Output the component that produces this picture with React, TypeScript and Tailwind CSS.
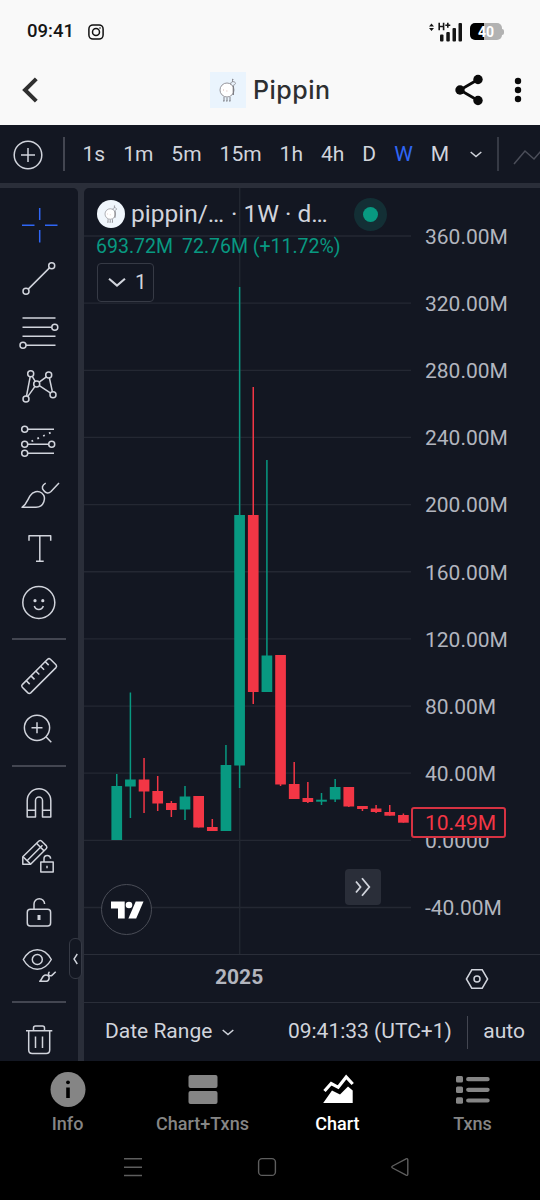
import type { ReactNode } from "react";
import { clsx } from "clsx";

// [high, bodyTop, bodyBottom, low, up]
const candles: [number, number, number, number, boolean][] = [
  [774, 786, 840, 840, true],
  [692.5, 779.5, 786.5, 818, true],
  [758, 779.5, 791.5, 813, false],
  [776, 791, 803.5, 811, false],
  [801, 803, 810, 817, false],
  [786, 796.5, 809.5, 820, true],
  [796, 796, 827.5, 827.5, false],
  [819, 827, 831, 831, false],
  [745, 765, 831, 831, true],
  [287, 515, 765.5, 788, true],
  [387, 515, 692, 704, false],
  [460, 655.5, 692, 692, true],
  [655, 655, 784.5, 786, false],
  [762, 784, 799, 799, false],
  [782, 798, 802, 803, false],
  [793, 799.7, 801.7, 805, true],
  [779, 787, 799.5, 802, true],
  [787, 787, 806.5, 807, false],
  [806, 806, 809, 811, false],
  [805, 808.5, 812, 813, false],
  [805, 812, 815.7, 815.7, false],
  [813.5, 815, 822.7, 822.7, false],
];

const prices = [
  "360.00M",
  "320.00M",
  "280.00M",
  "240.00M",
  "200.00M",
  "160.00M",
  "120.00M",
  "80.00M",
  "40.00M",
  "0.0000",
  "-40.00M",
];

const intervals = ["1s", "1m", "5m", "15m", "1h", "4h", "D", "W", "M"];

function Tool({ children, className }: { children: ReactNode; className?: string }) {
  return (
    <button className={clsx("ml-3 block h-[54px] w-[54px] shrink-0", className ?? "text-[#d1d4dc]")}>
      <svg
        viewBox="0 0 54 54"
        className="h-[54px] w-[54px]"
        fill="none"
        stroke="currentColor"
        strokeWidth="1.5"
        strokeLinejoin="round"
      >
        {children}
      </svg>
    </button>
  );
}

function Separator({ className }: { className: string }) {
  return (
    <div className={clsx("ml-3 flex w-[54px] shrink-0 items-center", className)}>
      <div className="h-[1.5px] w-full bg-[#434651]" />
    </div>
  );
}

function PippinMark({ className }: { className: string }) {
  return (
    <svg viewBox="0 0 18 24" className={className} fill="none" stroke="#8b8b92" strokeWidth="0.9">
      <circle cx="8" cy="12" r="7" fill="#fff" />
      <path d="M11.5 6.5c0-2.5 2-3.5 4-2.5s.5 3-1 3M13.5 4V.8M13 1.5h1.5" />
      <path d="M14.3 7.5v9.5" stroke="#77777d" strokeWidth="1.2" />
      <path d="M5 19v4M8 19.5V23M11 19v4M4 23h1.5M7 23h1.5M10 23h1.5" stroke="#77777d" />
      <path d="M4 12h.8M7.5 13h.8" stroke="#c79b94" />
    </svg>
  );
}

function Chevron({ className, width = 1.5 }: { className: string; width?: number }) {
  return (
    <svg viewBox="0 0 12 7" className={className} fill="none" stroke="currentColor" strokeWidth={width}>
      <path d="M.7 1 6 5.5 11.3 1" />
    </svg>
  );
}

function Header() {
  return (
    <header className="h-[125px] shrink-0 bg-[#f9f9f9]">
      <div className="flex h-[63px] items-center pl-[27px] pr-[36px]">
        <span className="text-[18.5px] font-medium text-[#151515]">09:41</span>
        <svg viewBox="0 0 16 16" className="ml-[14px] h-4 w-4" fill="none" stroke="#111" strokeWidth="1.5">
          <rect x="0.9" y="0.9" width="14.2" height="14.2" rx="4" />
          <circle cx="8" cy="8" r="3.5" />
          <circle cx="12" cy="4" r="0.8" fill="#111" stroke="none" />
        </svg>
        <svg viewBox="0 0 34 20" className="ml-auto h-5 w-[34px]" fill="#151515">
          <path d="M0 4.5 2.5 1.5 5 4.5zM0 6 2.5 9 5 6z" />
          <path
            d="M10.2 .8v7.5M14.6 .8v7.5M10.2 4.5h4.4M16.3 3.3h5M18.8.8v5"
            stroke="#151515"
            strokeWidth="1.6"
          />
          <rect x="11" y="12.5" width="3.5" height="7" rx="1" />
          <rect x="17.3" y="10" width="3.5" height="9.5" rx="1" />
          <rect x="23.5" y="6" width="3.5" height="13.5" rx="1" />
          <rect x="29.5" y="1" width="3.5" height="18.5" rx="1" />
        </svg>
        <div className="ml-[7px] flex items-center">
          <div className="flex h-[17px] w-8 items-center justify-center rounded-[5px] bg-linear-to-r from-black from-43% to-[#b2b2b2] to-43% text-[14px] leading-none font-bold text-white">
            40
          </div>
          <div className="h-[6px] w-[2px] rounded-r bg-[#b2b2b2]" />
        </div>
      </div>
      <div className="flex h-[54px] items-center">
        <svg viewBox="0 0 16 26" className="ml-[22px] h-[26px] w-4" fill="none" stroke="#2f2f2f" strokeWidth="4">
          <path d="M14.3 1.8 3 13l11.3 11.2" />
        </svg>
        <div className="ml-[172px] flex h-9 w-9 items-center justify-center bg-[#eaf4fd]">
          <PippinMark className="h-6 w-[18px]" />
        </div>
        <h1 className="ml-[7px] font-['Inter'] text-[25px] leading-8 font-medium tracking-[0.5px] text-[#2d2f31]">
          Pippin
        </h1>
        <svg viewBox="0 0 28 32" className="ml-auto h-8 w-7" fill="#0a0a0a">
          <path d="M23 5.5 5 16l18 10.5" fill="none" stroke="#0a0a0a" strokeWidth="2.8" />
          <circle cx="23" cy="5.5" r="4.7" />
          <circle cx="5" cy="16" r="4.7" />
          <circle cx="23" cy="26.5" r="4.7" />
        </svg>
        <svg viewBox="0 0 8 26" className="ml-[31px] mr-[18px] h-[26px] w-2" fill="#0a0a0a">
          <circle cx="4" cy="4" r="3.2" />
          <circle cx="4" cy="13" r="3.2" />
          <circle cx="4" cy="22" r="3.2" />
        </svg>
      </div>
    </header>
  );
}

function IntervalBar() {
  return (
    <div className="flex h-[58px] shrink-0 items-center overflow-hidden bg-[#131722] text-[#d1d4dc]">
      <svg viewBox="0 0 30 30" className="mt-[1px] ml-[13px] h-[30px] w-[30px] shrink-0" fill="none" stroke="currentColor" strokeWidth="1.5">
        <circle cx="15" cy="15" r="13.8" />
        <path d="M8 15h14M15 8v14" />
      </svg>
      <div className="ml-5 mr-[9px] h-[34px] w-[1.5px] shrink-0 bg-[#434651]" />
      {intervals.map((name) => (
        <button
          key={name}
          className={clsx(
            "shrink-0 px-[9px] text-[21px] leading-7",
            name === "W" && "text-[#2f66f5]"
          )}
        >
          {name}
        </button>
      ))}
      <Chevron className="ml-[12px] h-[7px] w-3 shrink-0" />
      <div className="ml-[15px] h-[34px] w-[1.5px] shrink-0 bg-[#363a45]" />
      <svg viewBox="0 0 28 16" className="mt-[6px] ml-[14px] h-4 w-7 shrink-0" fill="none" stroke="#4b4e59" strokeWidth="1.5">
        <path d="M1 15 12 2l9 8 7-8" />
      </svg>
    </div>
  );
}

function DrawingTools() {
  return (
    <aside className="relative h-full w-[78px] shrink-0 rounded-tr-[5px] bg-[#131722]">
      <div className="flex h-full flex-col overflow-hidden pt-[10px]">
        <Tool className="text-[#2f66f5]">
          <path d="M27.7 10v12M27.7 32v12.5M10 27.2h12.5M33 27.2h12.5" />
        </Tool>
        <Tool>
          <circle cx="14" cy="39.3" r="3" />
          <circle cx="39.7" cy="13.7" r="3" />
          <path d="M16.2 37.1 37.5 15.9" />
        </Tool>
        <Tool>
          <path d="M10.5 12h33M10.5 21.2h29.3M10.5 30.2h33M14 39.3h29.5" />
          <circle cx="42.8" cy="21.2" r="3" />
          <circle cx="11" cy="39.3" r="3" />
        </Tool>
        <Tool>
          <path d="M14.5 36 18.2 16.7M20.2 16.3l3 5M27.2 22.2l7.2-5.4M37.4 18l3 13.8M27.3 25.7l11 7.2M23 26.4l-7.3 10.2" />
          <circle cx="18.7" cy="13.7" r="3" />
          <circle cx="36.7" cy="15" r="3" />
          <circle cx="24.7" cy="24" r="3" />
          <circle cx="14" cy="39" r="3" />
          <circle cx="41" cy="34.7" r="3" />
        </Tool>
        <Tool>
          <path d="M15.7 15.2H42M15.7 30.3h21M15.7 39.3H42" />
          <path d="M19.5 27.3 40 18" strokeWidth="1.8" strokeDasharray="1.8 4.6" />
          <circle cx="12.7" cy="15.2" r="3" />
          <circle cx="12.7" cy="30.3" r="3" />
          <circle cx="39.7" cy="30.3" r="3" />
          <circle cx="12.7" cy="39.3" r="3" />
        </Tool>
        <Tool>
          <path d="M10 39.3c5-3.5 5.5-7.5 8-11.5 3-4.5 8-5.5 11.8-2.8C35 29.5 32 39.3 24 39.3z" />
          <path d="M33.7 15.2c-3.8 2.3-4.2 4.6-2 7.3 2.3 3 5 3.3 7.3 1L47 15" />
        </Tool>
        <Tool>
          <path d="M17 18.8v-5.1h21.7v5.1M27.8 13.7v25.6M24 39.3h7.7" />
        </Tool>
        <Tool>
          <circle cx="26.8" cy="26.5" r="16" />
          <circle cx="23" cy="24.7" r="1.6" fill="currentColor" stroke="none" />
          <circle cx="30.8" cy="24.7" r="1.6" fill="currentColor" stroke="none" />
          <path d="M22.3 30c1.5 4.6 7.5 4.6 9 0" />
        </Tool>
        <Separator className="h-[18px]" />
        <Tool>
          <path d="M10.3 36.6 35.6 11.2q1.4-1.2 2.8 0l5.6 5.6q1.2 1.4 0 2.8L18.7 44.9q-1.4 1.2-2.8 0l-5.6-5.6q-1.2-1.4 0-2.7z" />
          <path d="m14.2 32.6 3.5 3.5M19 27.9l3.5 3.5M23.8 23l3.5 3.5M28.6 18.2l3.5 3.5M33.2 13.6l3.5 3.5" />
        </Tool>
        <Tool>
          <circle cx="25" cy="25.8" r="12.6" />
          <path d="M19.5 25.8h11M25 20.3v11M33.9 34.7l5.4 5.6" />
        </Tool>
        <Separator className="h-5" />
        <Tool>
          <path d="M15.2 41V24.5a11.8 11.8 0 0 1 23.6 0V41h-8.3V24.5a3.5 3.5 0 0 0-7 0V41zM15.2 34.3h8.3M30.5 34.3h8.3" />
        </Tool>
        <Tool>
          <path d="M10.8 34.3v-7.6L26.9 11q1.4-1 2.6 0l4.9 4.9q1 1.3 0 2.6L18.6 34.3z" />
          <path d="m11 26.8 7.6 7.3M15 30.8 30.5 15.3M24.5 13.3l7.6 7.6" />
          <rect x="28.8" y="32" width="12.4" height="10" fill="#131722" />
          <path d="M32 32v-3.3a3.3 3.3 0 0 1 6.6 0M35 35.7v2.6" />
        </Tool>
        <Tool>
          <rect x="15.3" y="25.3" width="23.3" height="16.8" rx="3" />
          <path d="M22 25.3V20a5.3 5.3 0 0 1 10.6 0" />
          <path d="M27 31v5" strokeWidth="3" />
        </Tool>
        <Tool>
          <path d="M11.3 21.5c7.2-13 20.8-13 28 0-7.2 13-20.8 13-28 0z" />
          <circle cx="25.3" cy="21.5" r="5" />
          <path d="M27.7 43.3c3-2 2-6 6-6.3 5-.2 4.3 6.3-.5 6.3zM37.5 33.8c-2.7 2.5.5 5.5 2.7 3.3l3.5-3.3" />
        </Tool>
        <Separator className="h-5" />
        <Tool>
          <path d="M14 18.7h26.3M21.5 18.7V16q0-2 2-2h7q2 0 2 2v2.7M16.7 18.7V38q0 3.5 3.5 3.5h14q3.5 0 3.5-3.5V18.7M23.5 24.5V36M30.5 24.5V36" />
        </Tool>
      </div>
      <button className="absolute top-[750px] left-[69px] flex h-[41px] w-[13px] items-center justify-center rounded-[6px] border border-[#363a45] bg-[#131722] text-[#d1d4dc]">
        <svg viewBox="0 0 5 12" className="h-3 w-[5px]" fill="none" stroke="currentColor" strokeWidth="1.4">
          <path d="M4.3 1 1 6l3.3 5" />
        </svg>
      </button>
    </aside>
  );
}

function Candles() {
  return (
    <svg viewBox="84 188 327 766" className="block h-[766px] w-[327px]">
      {prices.map((price, i) => (
        <path key={price} d={`M84 ${236 + i * 67.15}H411`} stroke="#242833" strokeWidth="1.3" />
      ))}
      <path d="M239.7 188V954" stroke="#242833" strokeWidth="1.3" />
      {candles.map(([high, top, bottom, low, up], i) => {
        const x = 116.7 + i * 13.65;
        return (
          <g key={i} fill={up ? "#089981" : "#f23645"}>
            <rect x={x - 0.7} y={high} width="1.5" height={low - high} />
            <rect x={x - 5.3} y={top} width="10.7" height={bottom - top} />
          </g>
        );
      })}
    </svg>
  );
}

function Legend() {
  return (
    <div className="absolute top-0 left-0 pt-[10px] pl-[12px]">
      <div className="flex h-8 items-center text-[24.5px] leading-8 text-[#d1d4dc]">
        <div className="mr-[6px] ml-[1px] flex h-7 w-7 shrink-0 items-center justify-center rounded-full bg-[#f0f6fc]">
          <PippinMark className="h-[18px] w-[14px]" />
        </div>
        <span className="w-[94px] whitespace-nowrap">pippin/…</span>
        <span className="w-[129px] pl-[6px] whitespace-pre">· 1W · d…</span>
        <div className="flex h-[33px] w-[33px] items-center justify-center rounded-full bg-[#132f35]">
          <div className="h-[15px] w-[15px] rounded-full bg-[#089981]" />
        </div>
      </div>
      <div className="flex h-8 items-center gap-[9px] pt-[2px] text-[19.5px] whitespace-nowrap text-[#089981]">
        <span>693.72M</span>
        <span>72.76M (+11.72%)</span>
      </div>
      <button className="mt-[1px] ml-[1px] flex h-[39px] w-[57px] items-center rounded-[4px] border border-[#363a45] pl-[10px] text-[20.5px] text-[#d1d4dc]">
        <Chevron className="mr-[9px] h-[11px] w-[18px]" width={1.4} />1
      </button>
    </div>
  );
}

function ChartPanel() {
  return (
    <main className="flex h-full w-[456px] flex-col rounded-tl-[5px] bg-[#131722]">
      <div className="relative flex h-[766px] shrink-0">
        <Candles />
        <div className="flex flex-1 flex-col pt-[16px] pl-[14px] text-[21px] text-[#b2b5be]">
          {prices.map((price) => (
            <div key={price} className="flex h-[67.15px] items-center">
              {price}
            </div>
          ))}
        </div>
        <Legend />
        <div className="absolute top-[619px] left-[327px] flex h-[31px] w-[95px] items-center rounded-[3px] border-2 border-[#d63242] bg-[#131722] pt-[2px] pl-[12px] text-[21px] text-[#f23645]">
          10.49M
        </div>
        <button className="absolute top-[681px] left-[261px] flex h-9 w-9 items-center justify-center rounded-[4px] bg-[#2a2e39]">
          <svg viewBox="0 0 18 20" className="h-5 w-[18px]" fill="none" stroke="#d1d4dc" strokeWidth="1.8">
            <path d="m2 4.5 4.5 5.5L2 15.5M8 1.2l7.3 8.8L8 18.8" />
          </svg>
        </button>
        <div className="absolute top-[696px] left-[17px] flex h-[51px] w-[51px] items-center justify-center rounded-full border border-[#4a4d57] bg-[#131722]">
          <svg viewBox="0 0 34 18" className="h-[18px] w-[34px]" fill="#fff">
            <path d="M1 .5h13.7v17H8v-10H1z" />
            <circle cx="19" cy="4" r="3.3" />
            <path d="M25.7.5h7.8l-7.3 17h-7.8z" />
          </svg>
        </div>
      </div>
      <div className="flex h-[48px] shrink-0 border-t border-[#2a2e39]">
        <div className="flex w-[327px] items-center pb-[1px] pl-[131px] text-[21px] font-bold text-[#b2b5be]">
          2025
        </div>
        <div className="flex flex-1 items-center justify-center">
          <svg viewBox="0 0 24 20" className="ml-[2px] h-5 w-6" fill="none" stroke="#d1d4dc" strokeWidth="1.5">
            <path d="M6.8.8h10.4L22.6 10l-5.4 9.2H6.8L1.4 10z" />
            <circle cx="12" cy="10" r="3" />
          </svg>
        </div>
      </div>
      <div className="flex flex-1 items-center border-t border-[#2a2e39] pl-[21px] text-[21px] whitespace-nowrap text-[#d1d4dc]">
        <button>Date Range</button>
        <Chevron className="ml-[10px] h-[7px] w-3" />
        <span className="ml-auto">09:41:33 (UTC+1)</span>
        <div className="mx-[15px] h-[33px] w-[1.5px] bg-[#434651]" />
        <button className="mr-[15px]">auto</button>
      </div>
    </main>
  );
}

function Tab({ label, active, children }: { label: string; active?: boolean; children: ReactNode }) {
  return (
    <button
      className={clsx(
        "flex w-[135px] flex-col items-center",
        active ? "text-white" : "text-[#858585]"
      )}
    >
      <svg viewBox="0 0 36 36" className="h-9 w-9" fill="currentColor">
        {children}
      </svg>
      <span className="mt-[5px] text-[18px] leading-6 font-medium">{label}</span>
    </button>
  );
}

function BottomNav() {
  return (
    <footer className="flex-1 bg-black">
      <nav className="flex h-[85px] pt-[10px]">
        <Tab label="Info">
          <circle cx="18" cy="18.5" r="17.5" />
          <circle cx="18" cy="11.3" r="1.9" fill="#000" />
          <path d="M16.2 16.5h3.6V27h-3.6z" fill="#000" />
        </Tab>
        <Tab label="Chart+Txns">
          <rect x="3.5" y="4" width="29" height="13" rx="2" />
          <rect x="3.5" y="19.9" width="29" height="13" rx="2" />
        </Tab>
        <Tab label="Chart" active>
          <path d="m4.5 20 6.7-7.5 7 3.8 8-10.3 6.5 7" fill="none" stroke="currentColor" strokeWidth="3.2" />
          <path d="M3.2 32 12 19.5l8 4 8-8 4.7 4V32z" />
        </Tab>
        <Tab label="Txns">
          <rect x="1" y="5" width="7" height="6.5" rx="1.5" />
          <rect x="1" y="15.5" width="7" height="6.5" rx="1.5" />
          <rect x="1" y="26.2" width="7" height="6.5" rx="1.5" />
          <path d="M13.2 8.2h19.4M13.2 18.8h19.4M13.2 29.5h19.4" stroke="currentColor" strokeWidth="4.2" strokeLinecap="round" />
        </Tab>
      </nav>
      <div className="flex h-[42px] items-center pl-[123px]">
        <svg viewBox="0 0 20 20" className="h-5 w-5" fill="none" stroke="#5e5e5e" strokeWidth="1.4">
          <path d="M1 1.8h18M1 10.2h18M1 18.5h18" />
        </svg>
        <svg viewBox="0 0 20 20" className="ml-[114px] h-5 w-5" fill="none" stroke="#5e5e5e" strokeWidth="1.4">
          <rect x="1.6" y="1.6" width="16.8" height="16.8" rx="3.5" />
        </svg>
        <svg viewBox="0 0 20 20" className="ml-[113px] h-5 w-5" fill="none" stroke="#5e5e5e" strokeWidth="1.4" strokeLinejoin="round">
          <path d="M17.8 3v14q0 1.8-1.7 1.2L2.6 11q-1.6-1 0-2L16.1 1.8q1.7-.6 1.7 1.2z" />
        </svg>
      </div>
    </footer>
  );
}

export default function App() {
  return (
    <div className="flex h-[1200px] w-[540px] flex-col overflow-hidden bg-black font-['Roboto',sans-serif]">
      <Header />
      <IntervalBar />
      <div className="flex h-[878px] shrink-0 gap-[6px] bg-[#2a2e39] pt-[5px]">
        <DrawingTools />
        <ChartPanel />
      </div>
      <BottomNav />
    </div>
  );
}
